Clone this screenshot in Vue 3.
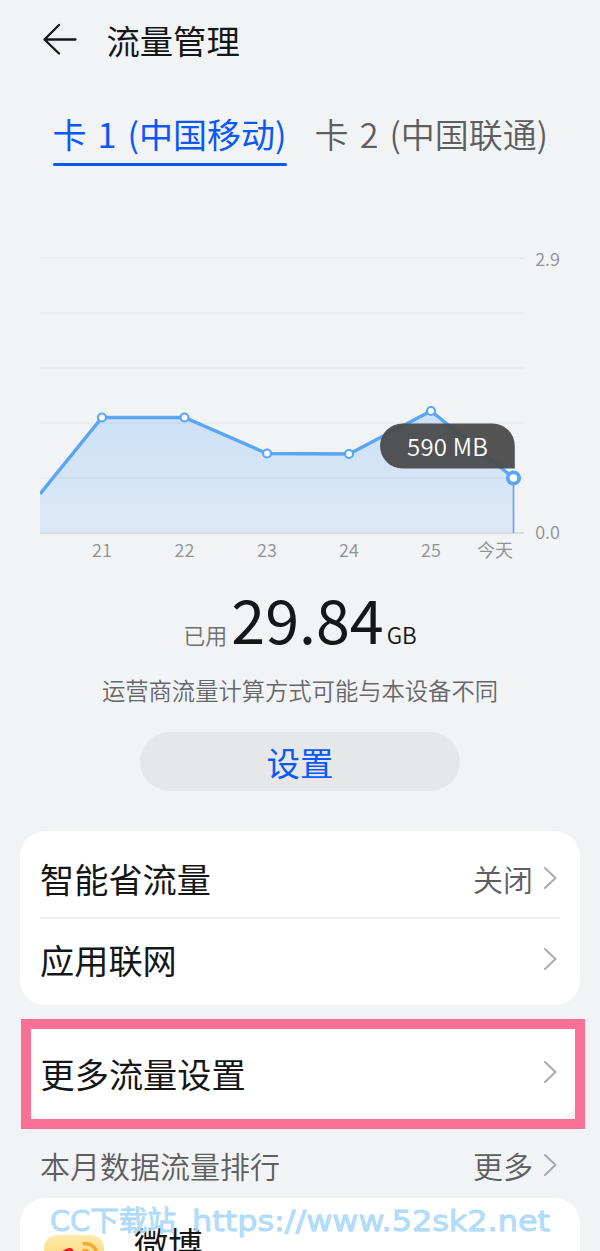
<script setup>
import { computed, ref } from 'vue'

const tabs = [
  { id: 1, label: '卡 1 (中国移动)' },
  { id: 2, label: '卡 2 (中国联通)' }
]
const activeTab = ref(1)

const gridLines = [18, 73, 128, 183, 238]

const points = [
  { x: 102, y: 177.5, label: '21' },
  { x: 184.5, y: 177.5, label: '22' },
  { x: 267, y: 213.5, label: '23' },
  { x: 349, y: 214, label: '24' },
  { x: 431, y: 171, label: '25' }
]
const today = { x: 513.5, y: 238 }

const line = computed(() =>
  [{ x: 40, y: 254 }, ...points, today].map(p => `${p.x},${p.y}`).join(' ')
)
const area = computed(() => `${line.value} ${today.x},292 40,292`)

const settings = [
  { name: '智能省流量', value: '关闭' },
  { name: '应用联网', value: '' }
]
</script>

<template>
  <div class="page">
    <header class="header">
      <svg class="back" width="36" height="34" viewBox="0 0 36 34">
        <path d="M17 3 2.5 17.5 17 31.5M2.5 17.5H33.500" />
      </svg>
      <h1>流量管理</h1>
    </header>

    <nav class="tabs">
      <button
        v-for="tab in tabs"
        :key="tab.id"
        type="button"
        class="tab"
        :class="{ active: tab.id === activeTab }"
        @click="activeTab = tab.id"
      >
        {{ tab.label }}
      </button>
    </nav>

    <svg class="chart" width="600" height="330" viewBox="0 0 600 330">
      <defs>
        <linearGradient id="fill" x1="0" y1="0" x2="0" y2="1">
          <stop offset="0" stop-color="#cde1f7" />
          <stop offset="1" stop-color="#dce8f6" />
        </linearGradient>
        <clipPath id="plot">
          <rect x="40" y="0" width="500" height="330" />
        </clipPath>
      </defs>
      <polygon :points="area" fill="url(#fill)" />
      <line
        v-for="y in gridLines"
        :key="y"
        class="grid"
        x1="40"
        x2="524"
        :y1="y"
        :y2="y"
      />
      <line class="axis" x1="40" x2="524" y1="293" y2="293" />
      <line class="marker" :x1="today.x" :x2="today.x" :y1="today.y" y2="293" />
      <polyline class="line" :points="line" clip-path="url(#plot)" />
      <circle
        v-for="p in points"
        :key="p.label"
        class="dot"
        :cx="p.x"
        :cy="p.y"
        r="4"
      />
      <path
        class="tooltip"
        d="M402.5 183.5H492.5A22.3 22.3 0 0 1 514.8 205.8V228.5H402.5A22.5 22.5 0 0 1 402.5 183.5Z"
      />
      <circle class="dot today" :cx="today.x" :cy="today.y" r="5.7" />
      <text class="tooltip-text" x="447.5" y="215.5" textLength="81">590 MB</text>
      <text
        v-for="p in points"
        :key="p.label"
        class="label"
        :x="p.x"
        y="317"
      >{{ p.label }}</text>
      <text class="label" x="495" y="316.5">今天</text>
      <text class="label" x="547.5" y="26">2.9</text>
      <text class="label" x="547.5" y="298.5">0.0</text>
    </svg>

    <section class="usage">
      <div class="total">
        <span class="used">已用</span>
        <span class="amount">29.84</span>
        <span class="unit">GB</span>
      </div>
      <p>运营商流量计算方式可能与本设备不同</p>
      <button type="button" class="set">设置</button>
    </section>

    <ul class="card">
      <li v-for="item in settings" :key="item.name">
        <span class="name">{{ item.name }}</span>
        <span class="value">{{ item.value }}</span>
        <svg class="chevron" width="14" height="24" viewBox="0 0 14 24">
          <path d="M1 2 11.5 12 1 22" />
        </svg>
      </li>
    </ul>

    <div class="highlight">
      <div class="more-settings">
        <span class="name">更多流量设置</span>
        <svg class="chevron" width="14" height="24" viewBox="0 0 14 24">
          <path d="M1 2 11.5 12 1 22" />
        </svg>
      </div>
    </div>

    <div class="ranking">
      <span>本月数据流量排行</span>
      <span class="value">更多</span>
      <svg class="chevron" width="14" height="24" viewBox="0 0 14 24">
        <path d="M1 2 11.5 12 1 22" />
      </svg>
    </div>

    <div class="apps">
      <svg class="weibo" width="60" height="60" viewBox="0 0 60 60">
        <defs>
          <linearGradient id="weibo-bg" x1="0" y1="0" x2="0" y2="1">
            <stop offset="0" stop-color="#ffe9ad" />
            <stop offset="0.25" stop-color="#ffe08e" />
            <stop offset="1" stop-color="#fff0c8" />
          </linearGradient>
        </defs>
        <rect width="60" height="60" rx="13" fill="url(#weibo-bg)" />
        <path d="M8 31C8 23 20 13 26 13C30 13 30 18 29 20C39 16 42 21 40 25C58 30 45 48 27 48C16 48 8 41 8 31Z" fill="#e51c23" />
        <ellipse cx="26" cy="34" rx="14" ry="10" fill="#fff" />
        <circle cx="25" cy="34" r="6" fill="#111" />
        <path d="M40 8.500C49 8 54 15 52.500 23M40 15.500C44 15.500 47 18 46 22" fill="none" stroke="#ffa62b" stroke-width="3.500" stroke-linecap="round" />
      </svg>
      <span class="name">微博</span>
    </div>

    <svg class="watermark" width="510" height="48" viewBox="0 0 510 48">
      <text x="5" y="32" textLength="126" lengthAdjust="spacingAndGlyphs">CC下载站</text>
      <text x="147" y="32" textLength="358" lengthAdjust="spacingAndGlyphs">https://www.52sk2.net</text>
    </svg>
  </div>
</template>

<style>
body {
  margin: 0;
  background: #f1f3f5;
}
</style>

<style scoped>
.page {
  position: relative;
  box-sizing: border-box;
  width: 600px;
  height: 1251px;
  overflow: hidden;
  background: #f1f3f5;
  color: #151617;
  font-family: 'Noto Sans CJK SC', sans-serif;
}

button {
  padding: 0;
  border: 0;
  background: none;
  font-family: inherit;
}

.header {
  display: flex;
  align-items: center;
  height: 82px;
  padding-left: 42px;
}

.back {
  margin-bottom: 4px;
  fill: none;
  stroke: #151617;
  stroke-width: 2.3;
  stroke-linecap: round;
  stroke-linejoin: round;
}

h1 {
  margin: 0 0 2px 28.5px;
  font-size: 33.3px;
  font-weight: 400;
  line-height: 48px;
}

.tabs {
  display: flex;
  gap: 28px;
  height: 84px;
  padding-left: 52.5px;
}

.tab {
  display: flex;
  flex-direction: column;
  align-items: stretch;
  height: 84px;
  padding-top: 28px;
  color: #5d5e60;
  font-size: 34px;
  font-weight: 350;
  line-height: 48px;
  white-space: nowrap;
  word-spacing: 3.5px;
}

.tab.active {
  color: #0a59f7;
  font-weight: 400;
}

.tab.active::after {
  content: '';
  height: 3px;
  margin-top: 5px;
  border-radius: 2px;
  background: #0a59f7;
}

.chart {
  display: block;
  margin-top: 74px;
}

.grid {
  stroke: #000;
  stroke-opacity: 0.038;
  stroke-width: 1.5;
}

.axis {
  stroke: #ccd4de;
  stroke-width: 1.5;
}

.marker {
  stroke: #5ba5f8;
  stroke-width: 1.6;
}

.line {
  fill: none;
  stroke: #5ba5f8;
  stroke-width: 3.4;
}

.dot {
  fill: #fff;
  stroke: #5ba5f8;
  stroke-width: 2.2;
}

.today {
  stroke-width: 3.8;
}

.label {
  fill: #8f9193;
  font-size: 18px;
  font-weight: 350;
  text-anchor: middle;
}

.tooltip {
  fill: #4a4a4a;
  fill-opacity: 0.95;
}

.tooltip-text {
  fill: #fff;
  font-size: 24px;
  font-weight: 350;
  text-anchor: middle;
}

.usage {
  display: flex;
  flex-direction: column;
  align-items: center;
}

.total {
  display: flex;
  align-items: baseline;
  height: 98px;
  line-height: 95px;
}

.used {
  color: #6d6e70;
  font-size: 22px;
  font-weight: 350;
}

.amount {
  margin: 0 3px 0 4px;
  font-size: 61px;
  font-weight: 370;
}

.unit {
  font-size: 22.5px;
  font-weight: 350;
}

.usage p {
  margin: 5px 0 0;
  color: #66676a;
  font-size: 23.3px;
  font-weight: 350;
  line-height: 34px;
}

.set {
  width: 320px;
  height: 59px;
  margin-top: 25px;
  border-radius: 30px;
  background: #e6e7e9;
  color: #0a59f7;
  font-size: 33.5px;
  line-height: 60px;
}

.card {
  height: 174px;
  margin: 40px 20px 0;
  padding: 10px 20px 0;
  box-sizing: border-box;
  border-radius: 25px;
  background: #fff;
  list-style: none;
}

.card li {
  display: flex;
  align-items: center;
  height: 76px;
}

.card li + li {
  height: 82px;
  border-top: 2px solid #ececed;
}

.name {
  flex: 1;
  margin-bottom: 2px;
  font-size: 34.2px;
  line-height: 48px;
}

.value {
  margin-bottom: 2px;
  color: #5d5e60;
  font-size: 30px;
  font-weight: 350;
  line-height: 44px;
}

.chevron {
  margin: 0 2px 3px 11px;
  fill: none;
  stroke: #a9aaac;
  stroke-width: 2;
  stroke-linecap: round;
  stroke-linejoin: round;
}

.highlight {
  box-sizing: border-box;
  width: 564px;
  height: 110px;
  margin: 14px 0 0 20.5px;
  border: 10px solid #f96f95;
}

.more-settings {
  display: flex;
  align-items: center;
  height: 90px;
  padding: 0 14.5px 1px 10px;
  border-radius: 0 0 18px 10px;
  background: #fff;
  box-sizing: border-box;
}

.ranking {
  display: flex;
  align-items: center;
  height: 69px;
  margin-right: 20px;
  padding: 3px 20px 0 40px;
  box-sizing: border-box;
  color: #5d5e60;
  font-size: 30px;
  font-weight: 350;
  line-height: 44px;
}

.ranking .value {
  margin: 0 0 0 auto;
}

.ranking .chevron {
  margin-bottom: 1px;
}

.apps {
  display: flex;
  align-items: flex-start;
  height: 90px;
  margin: 0 20px;
  padding: 37px 24px 0;
  border-radius: 25px 25px 0 0;
  background: #fff;
}

.weibo {
  flex: none;
}

.apps .name {
  margin: -17px 0 0 30px;
}

.watermark {
  position: absolute;
  left: 45px;
  top: 1199px;
  fill: #a9d8fb;
  fill-opacity: 0.85;
  stroke: #a9d8fb;
  stroke-width: 0.8;
  font-family: 'DejaVu Sans', 'Noto Sans CJK SC', sans-serif;
  font-size: 28px;
}
</style>
